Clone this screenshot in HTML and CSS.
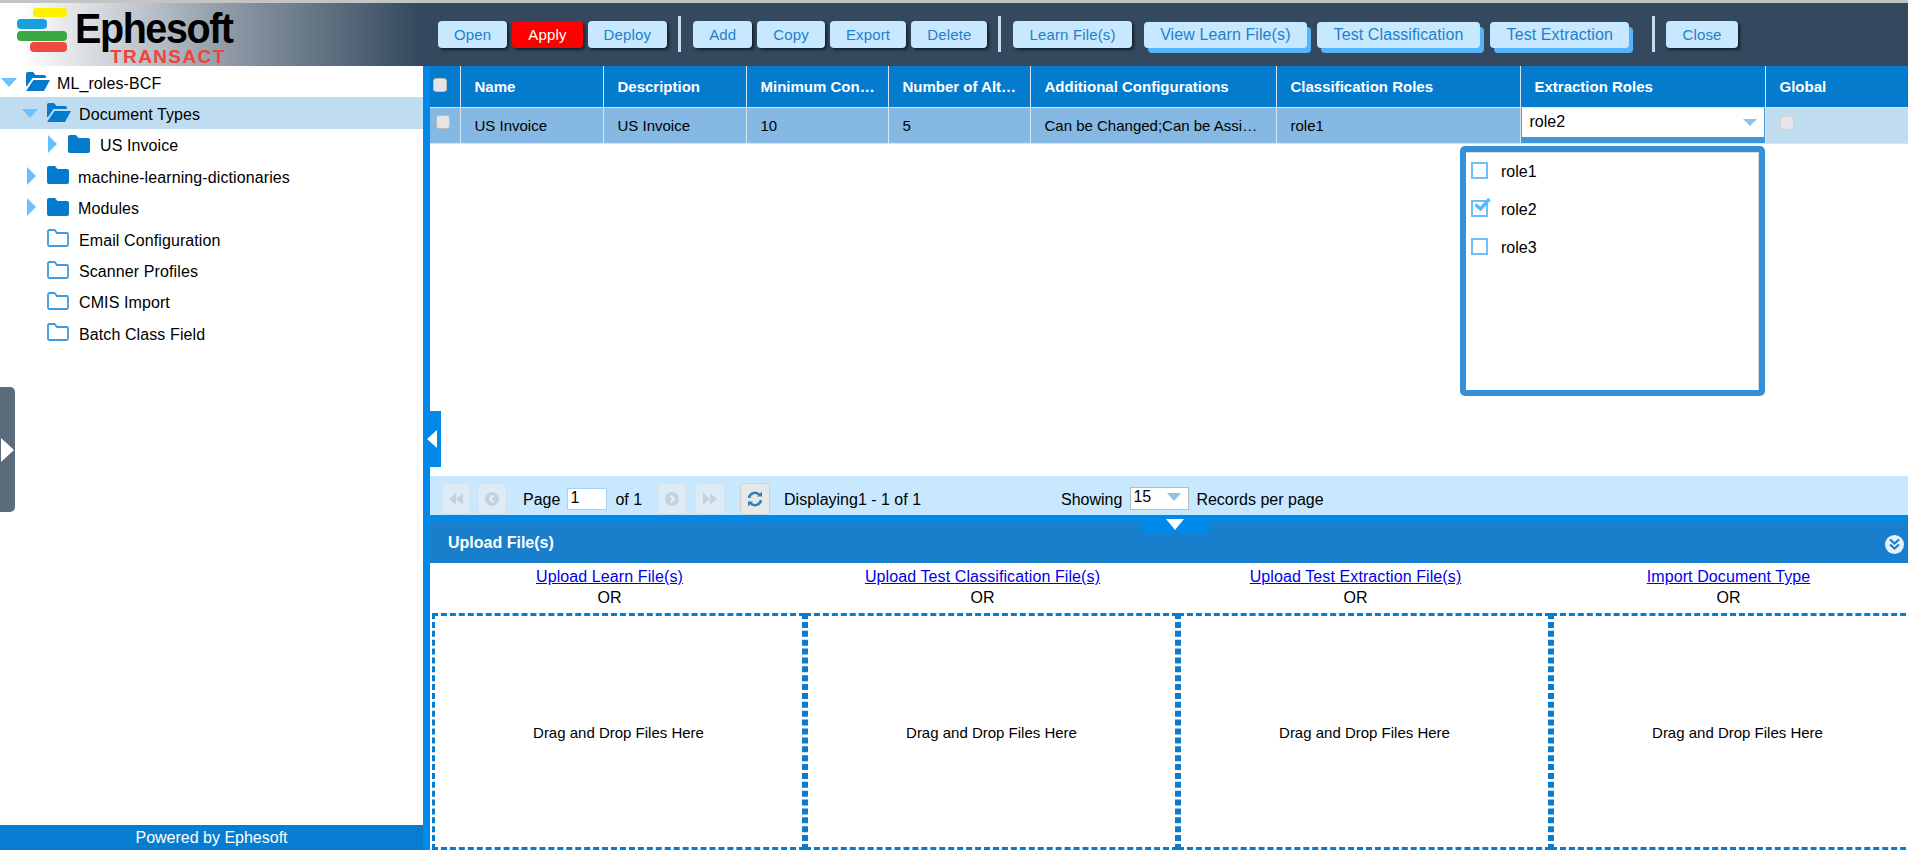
FILE: index.html
```html
<!DOCTYPE html>
<html lang="en">
<head>
    <meta charset="UTF-8">
    <title>Ephesoft Transact</title>
    <link rel="stylesheet" href="styles.css">
</head>
<body>
    <svg class="defs" width="0" height="0">
        <symbol id="folder-closed" viewBox="0 0 22 18">
            <path d="M2 0h6l2.500 3H20a2 2 0 0 1 2 2v11a2 2 0 0 1-2 2H2a2 2 0 0 1-2-2V2a2 2 0 0 1 2-2z" fill="#047bcd"/>
        </symbol>
        <symbol id="folder-open" viewBox="0 0 24 19">
            <path d="M0 2a2 2 0 0 1 2-2h5l2.500 3H18a2 2 0 0 1 2 2v1H6.500L1 14H0z" fill="#047bcd"/>
            <path d="M7.500 8H24l-6 11H0z" fill="#047bcd"/>
        </symbol>
        <symbol id="folder-empty" viewBox="0 0 22 18">
            <path d="M2.500 1h5l2.500 3h9.500A1.500 1.500 0 0 1 21 5.500v10a1.500 1.500 0 0 1-1.500 1.500h-17A1.500 1.500 0 0 1 1 15.500v-13A1.500 1.500 0 0 1 2.500 1z" fill="none" stroke="#3f9ae0" stroke-width="1.800"/>
        </symbol>
    </svg>

    <div class="top-line"></div>
    <header class="header">
        <div class="logo">
            <svg class="logo-bars" width="52" height="46" viewBox="0 0 52 46">
                <rect x="16" y="0" width="34" height="9" rx="3.500" fill="#fff200"/>
                <rect x="0" y="11" width="30" height="10" rx="4" fill="#17a0dc"/>
                <rect x="0" y="23" width="50" height="10" rx="4" fill="#3aa845"/>
                <rect x="13" y="34" width="37" height="10" rx="4" fill="#f0493e"/>
            </svg>
            <div class="logo-text">
                <span class="logo-name">Ephesoft</span>
                <span class="logo-product">TRANSACT</span>
            </div>
        </div>
        <nav class="toolbar">
            <button class="btn">Open</button>
            <button class="btn btn-red">Apply</button>
            <button class="btn">Deploy</button>
            <span class="sep"></span>
            <button class="btn">Add</button>
            <button class="btn">Copy</button>
            <button class="btn">Export</button>
            <button class="btn">Delete</button>
            <span class="sep"></span>
            <button class="btn">Learn File(s)</button>
            <button class="btn btn-tab btn-first-tab">View Learn File(s)</button>
            <button class="btn btn-tab">Test Classification</button>
            <button class="btn btn-tab">Test Extraction</button>
            <span class="sep sep-tab"></span>
            <button class="btn">Close</button>
        </nav>
    </header>

    <div class="content">
        <aside class="sidebar">
            <ul class="tree">
                <li class="node level-0">
                    <span class="arrow-down"></span>
                    <svg class="folder"><use href="#folder-open"/></svg>
                    <span class="label">ML_roles-BCF</span>
                </li>
                <li class="node level-1 selected">
                    <span class="arrow-down"></span>
                    <svg class="folder"><use href="#folder-open"/></svg>
                    <span class="label">Document Types</span>
                </li>
                <li class="node level-2">
                    <span class="arrow-right"></span>
                    <svg class="folder"><use href="#folder-closed"/></svg>
                    <span class="label">US Invoice</span>
                </li>
                <li class="node level-1">
                    <span class="arrow-right"></span>
                    <svg class="folder"><use href="#folder-closed"/></svg>
                    <span class="label">machine-learning-dictionaries</span>
                </li>
                <li class="node level-1">
                    <span class="arrow-right"></span>
                    <svg class="folder"><use href="#folder-closed"/></svg>
                    <span class="label">Modules</span>
                </li>
                <li class="node level-1 leaf">
                    <span class="arrow-none"></span>
                    <svg class="folder"><use href="#folder-empty"/></svg>
                    <span class="label">Email Configuration</span>
                </li>
                <li class="node level-1 leaf">
                    <span class="arrow-none"></span>
                    <svg class="folder"><use href="#folder-empty"/></svg>
                    <span class="label">Scanner Profiles</span>
                </li>
                <li class="node level-1 leaf">
                    <span class="arrow-none"></span>
                    <svg class="folder"><use href="#folder-empty"/></svg>
                    <span class="label">CMIS Import</span>
                </li>
                <li class="node level-1 leaf">
                    <span class="arrow-none"></span>
                    <svg class="folder"><use href="#folder-empty"/></svg>
                    <span class="label">Batch Class Field</span>
                </li>
            </ul>
            <div class="powered">Powered by Ephesoft</div>
            <div class="side-tab"><span class="side-tab-arrow"></span></div>
        </aside>

        <div class="divider">
            <div class="divider-tab"><span class="divider-arrow"></span></div>
        </div>

        <main class="main">
            <section class="grid-area">
                <table class="grid">
                    <colgroup>
                        <col class="col-check">
                        <col class="col-name">
                        <col class="col-name">
                        <col class="col-num">
                        <col class="col-num">
                        <col class="col-config">
                        <col class="col-class">
                        <col class="col-extract">
                        <col class="col-global">
                    </colgroup>
                    <thead>
                        <tr>
                            <th class="cell-check"><span class="check check-head"></span></th>
                            <th>Name</th>
                            <th>Description</th>
                            <th>Minimum Confidence</th>
                            <th>Number of Alternate Values</th>
                            <th>Additional Configurations</th>
                            <th>Classification Roles</th>
                            <th>Extraction Roles</th>
                            <th>Global</th>
                        </tr>
                    </thead>
                    <tbody>
                        <tr>
                            <td class="cell-check"><span class="check check-row"></span></td>
                            <td>US Invoice</td>
                            <td>US Invoice</td>
                            <td>10</td>
                            <td>5</td>
                            <td>Can be Changed;Can be Assigned</td>
                            <td>role1</td>
                            <td class="cell-editor">
                                <div class="editor"><span>role2</span><span class="caret"></span></div>
                            </td>
                            <td class="cell-global"><span class="check check-global"></span></td>
                        </tr>
                    </tbody>
                </table>

                <div class="role-menu">
                    <label class="role-item"><span class="role-box"></span>role1</label>
                    <label class="role-item">
                        <span class="role-box">
                            <svg class="role-tick" width="20" height="18" viewBox="0 0 20 18"><path d="M3.500 7.500l5 4.500 9-10" fill="none" stroke="#5db8fc" stroke-width="3.500"/></svg>
                        </span>role2
                    </label>
                    <label class="role-item"><span class="role-box"></span>role3</label>
                </div>
            </section>

            <div class="pager">
                <span class="pg-btn">
                    <svg width="16" height="14" viewBox="0 0 16 14"><path d="M8 1v12L1 7zM15 1v12L8 7z" fill="#c3d3de"/></svg>
                </span>
                <span class="pg-btn">
                    <svg width="16" height="16" viewBox="0 0 16 16"><circle cx="8" cy="8" r="7" fill="#c3d3de"/><path d="M9.500 4.500L6 8l3.500 3.500" fill="none" stroke="#e8f2f8" stroke-width="2"/></svg>
                </span>
                <span class="pg-text pg-page">Page</span>
                <input class="pg-input" value="1">
                <span class="pg-text">of 1</span>
                <span class="pg-btn pg-next">
                    <svg width="16" height="16" viewBox="0 0 16 16"><circle cx="8" cy="8" r="7" fill="#c3d3de"/><path d="M6.500 4.500L10 8l-3.500 3.500" fill="none" stroke="#e8f2f8" stroke-width="2"/></svg>
                </span>
                <span class="pg-btn">
                    <svg width="16" height="14" viewBox="0 0 16 14"><path d="M1 1v12l7-6zM8 1v12l7-6z" fill="#c3d3de"/></svg>
                </span>
                <span class="pg-btn pg-refresh">
                    <svg width="16" height="16" viewBox="0 0 16 16"><path d="M2 7a6 6 0 0 1 10.500-3M14 9a6 6 0 0 1-10.500 3" fill="none" stroke="#2d7fbe" stroke-width="2.500"/><path d="M10 5.500h5V.5zM6 10.500H1v5z" fill="#2d7fbe"/></svg>
                </span>
                <span class="pg-text pg-display">Displaying1 - 1 of 1</span>
                <span class="pg-text pg-showing">Showing</span>
                <span class="pg-select">15<span class="caret caret-small"></span></span>
                <span class="pg-text">Records per page</span>
            </div>

            <div class="upload-bar"></div>
            <div class="upload-head">
                <span>Upload File(s)</span>
                <svg class="upload-collapse" width="19" height="19" viewBox="0 0 19 19"><circle cx="9.500" cy="9.500" r="9.500" fill="#e4f2fb"/><path d="M5 4.500l4.500 4 4.500-4M5 9.500l4.500 4 4.500-4" fill="none" stroke="#197fcc" stroke-width="2.200"/></svg>
                <div class="upload-tab"><span class="upload-arrow"></span></div>
            </div>

            <section class="upload">
                <div class="upload-links">
                    <div class="upload-link"><a href="#">Upload Learn File(s)</a><span>OR</span></div>
                    <div class="upload-link"><a href="#">Upload Test Classification File(s)</a><span>OR</span></div>
                    <div class="upload-link"><a href="#">Upload Test Extraction File(s)</a><span>OR</span></div>
                    <div class="upload-link"><a href="#">Import Document Type</a><span>OR</span></div>
                </div>
                <div class="drops">
                    <div class="drop">Drag and Drop Files Here</div>
                    <div class="drop">Drag and Drop Files Here</div>
                    <div class="drop">Drag and Drop Files Here</div>
                    <div class="drop">Drag and Drop Files Here</div>
                </div>
            </section>
        </main>
    </div>
</body>
</html>
```

FILE: styles.css
```css
* {
    box-sizing: border-box;
}
html, body {
    margin: 0;
    height: 100%;
    overflow: hidden;
}
body {
    font-family: "Liberation Sans", Arial, sans-serif;
    font-size: 15px;
    color: #000;
    background-color: #fff;
}
.defs {
    position: absolute;
}
.top-line {
    height: 3px;
    background-color: #c4c4c4;
}

/* header */
.header {
    display: flex;
    height: 63px;
    background: linear-gradient(to right, #fff 0, #fff 20px, #8d99a5 230px, #34495e 420px);
}
.logo {
    display: flex;
    width: 438px;
    padding: 5px 0 0 17px;
}
.logo-bars {
    flex: none;
}
.logo-text {
    display: flex;
    flex-direction: column;
    margin-left: 6px;
}
.logo-name {
    width: 170px;
    margin-top: 2px;
    font-size: 42px;
    font-weight: bold;
    line-height: 38px;
    letter-spacing: -1.500px;
    transform: scaleX(0.94);
    transform-origin: left;
}
.logo-product {
    margin: -1px 0 0 35px;
    font-size: 19px;
    font-weight: bold;
    line-height: 19px;
    letter-spacing: 1.400px;
    color: #f0433a;
}
.toolbar {
    display: flex;
    align-items: flex-start;
    gap: 5px;
    padding-top: 18px;
}
.btn {
    height: 27px;
    padding: 0 16px;
    border: none;
    border-radius: 4px;
    font-family: inherit;
    font-size: 15px;
    letter-spacing: 0.150px;
    color: #1f7fc9;
    background-color: #c8e8ff;
    box-shadow: 2px 2px 3px #14202c;
}
.btn-red {
    color: #fff;
    background-color: #f00;
}
.btn-tab {
    margin: 1px 5px 0 0;
    height: 26px;
    padding: 0 16.500px;
    font-size: 16px;
    letter-spacing: 0.100px;
    box-shadow: 4px 5px 0 #55b4fb;
}
.btn-first-tab {
    margin-left: 7px;
}
.sep {
    width: 3px;
    height: 36px;
    margin: -5px 7px 0 6px;
    background-color: #c8dcec;
}
.sep-tab {
    margin-left: 13px;
    margin-right: 6px;
}

.content {
    display: flex;
    height: 784px;
}

/* left tree */
.sidebar {
    position: relative;
    display: flex;
    flex-direction: column;
    justify-content: space-between;
    flex: none;
    width: 423px;
}
.tree {
    margin: 0;
    padding: 0;
    list-style: none;
    font-size: 16px;
    letter-spacing: 0.100px;
}
.node {
    display: flex;
    align-items: center;
    height: 31.400px;
}
.node.selected {
    background-color: #bfdcf1;
}
.label {
    margin-top: 4px;
}
.level-0 {
    padding-left: 1px;
}
.level-1 {
    padding-left: 22px;
}
.level-2 {
    padding-left: 43px;
}
.arrow-down, .arrow-right, .arrow-none {
    flex: none;
    display: block;
    width: 25px;
    height: 0;
}
.arrow-down::before {
    content: "";
    display: block;
    width: 0;
    border-left: 8px solid transparent;
    border-right: 8px solid transparent;
    border-top: 9px solid #6cc0fc;
    margin-top: -4px;
}
.arrow-right::before {
    content: "";
    display: block;
    width: 0;
    margin-left: 5px;
    margin-top: -9px;
    border-top: 9px solid transparent;
    border-bottom: 9px solid transparent;
    border-left: 9px solid #6cc0fc;
}
.folder {
    flex: none;
    width: 24px;
    height: 19px;
    margin: -1px 8px 0 0;
}
.level-0 .folder {
    margin-right: 7px;
}
.level-2 .folder {
    width: 22px;
    height: 18px;
    margin-right: 10px;
}
.level-1 .arrow-right + .folder {
    width: 22px;
    height: 18px;
    margin-right: 9px;
}
.leaf .folder {
    width: 22px;
    height: 18px;
    margin-right: 10px;
}
.powered {
    height: 25px;
    font-size: 16px;
    line-height: 25px;
    text-align: center;
    color: #fff;
    background-color: #067dd0;
}
.side-tab {
    position: absolute;
    left: 0;
    top: 321px;
    display: flex;
    align-items: center;
    width: 15px;
    height: 125px;
    background-color: #5a6b7b;
    border-radius: 0 5px 5px 0;
}
.side-tab-arrow {
    margin-left: 1px;
    border-top: 12px solid transparent;
    border-bottom: 12px solid transparent;
    border-left: 13px solid #fff;
}
.divider {
    position: relative;
    flex: none;
    width: 7px;
    background-color: #0089e8;
}
.divider-tab {
    position: absolute;
    left: 0;
    top: 345px;
    display: flex;
    align-items: center;
    width: 18px;
    height: 56px;
    padding-left: 4px;
    background-color: #0089e8;
}
.divider-arrow {
    border-top: 9px solid transparent;
    border-bottom: 9px solid transparent;
    border-right: 10px solid #fff;
}

/* main column */
.main {
    display: flex;
    flex-direction: column;
    flex: 1;
    min-width: 0;
    overflow: hidden;
}
.grid-area {
    position: relative;
    height: 410px;
    flex: none;
}
.grid {
    width: 1478px;
    table-layout: fixed;
    border-collapse: collapse;
}
.col-check { width: 30px; }
.col-name { width: 143px; }
.col-num { width: 142px; }
.col-config { width: 246px; }
.col-class { width: 244px; }
.col-extract { width: 245px; }
.col-global { width: 143px; }
.grid th, .grid td {
    padding: 0 14px;
    text-align: left;
    white-space: nowrap;
    overflow: hidden;
    text-overflow: ellipsis;
    border-right: 1px solid #d3e6f4;
}
.grid th {
    height: 41px;
    padding-right: 8px;
    font-size: 15px;
    color: #fff;
    background-color: #047bcd;
    border-bottom: 1px solid #d3e6f4;
}
.grid td {
    height: 36px;
    font-size: 15px;
    background-color: #85b9e3;
    border-bottom: 1px solid #d3e6f4;
}
.grid th:last-child, .grid td:last-child {
    border-right: none;
}
.grid .cell-check {
    position: relative;
    padding: 0;
}
.check {
    position: absolute;
    width: 14px;
    height: 14px;
    background-color: #e5e5e5;
    border: 1px solid #bbb;
    border-radius: 3px;
}
.check-head {
    left: 3px;
    top: 12px;
}
.check-row {
    left: 6px;
    top: 7px;
}
.grid .cell-global {
    position: relative;
    background-color: #bfdcf1;
}
.check-global {
    left: 14px;
    top: 8px;
    border-color: #d5d5d5;
}
.grid .cell-editor {
    padding: 0;
    background-color: #3f97d9;
    vertical-align: top;
}
.editor {
    display: flex;
    justify-content: space-between;
    align-items: center;
    height: 30px;
    padding: 0 6px 0 8px;
    font-size: 16px;
    background-color: #fff;
    border: 1px solid #3f97d9;
    border-top: none;
}
.caret {
    display: block;
    margin-right: 1px;
    border-left: 7px solid transparent;
    border-right: 7px solid transparent;
    border-top: 7px solid #8fc0e8;
}
.role-menu {
    position: absolute;
    left: 1030px;
    top: 80px;
    width: 305px;
    height: 250px;
    padding: 1px 5px 0;
    background-color: #fff;
    border: 6px solid #3490d8;
    border-radius: 5px;
    box-shadow: inset 0 1px 0 #ddd, inset -1px 0 0 #ddd;
}
.role-item {
    display: flex;
    align-items: center;
    height: 38px;
    font-size: 16px;
}
.role-box {
    position: relative;
    flex: none;
    width: 17px;
    height: 17px;
    margin: -3px 13px 0 0;
    border: 2px solid #6cc0fc;
}
.role-tick {
    position: absolute;
    left: -1px;
    top: -5px;
}

/* pagination */
.pager {
    display: flex;
    align-items: flex-end;
    height: 39px;
    flex: none;
    padding-left: 11px;
    font-size: 16px;
    background-color: #c8e8ff;
}
.pg-btn {
    display: flex;
    align-items: center;
    justify-content: center;
    width: 30px;
    height: 32px;
    margin-right: 6px;
    background-color: #dcebf5;
    border: 1px solid #d2e2ec;
    border-radius: 4px;
}
.pg-next {
    margin-left: 15px;
    margin-right: 8px;
}
.pg-refresh {
    margin-left: 9px;
    background-color: #e8e8e8;
    border-color: #d0d0d0;
}
.pg-text {
    align-self: center;
    margin-top: 8px;
    white-space: nowrap;
}
.pg-page {
    margin-left: 10px;
}
.pg-input {
    align-self: center;
    width: 40px;
    height: 22px;
    margin: 7px 8px 0 7px;
    padding: 0 0 3px 2px;
    font-family: inherit;
    font-size: 16px;
    background-color: #fff;
    border: 1px solid #a9d2ef;
}
.pg-display {
    margin-left: 8px;
}
.pg-showing {
    margin-left: 140px;
}
.pg-select {
    align-self: center;
    display: flex;
    align-items: center;
    justify-content: space-between;
    width: 59px;
    height: 23px;
    margin: 5px 7px 0 8px;
    padding: 0 6px 2px 2px;
    background-color: #fff;
    border: 1px solid #bbb;
}
.caret-small {
    border-left-width: 7px;
    border-right-width: 7px;
    border-top-width: 8px;
}

/* upload panel */
.upload-bar {
    height: 7px;
    flex: none;
    background-color: #0089e8;
}
.upload-head {
    position: relative;
    display: flex;
    align-items: center;
    justify-content: space-between;
    height: 41px;
    flex: none;
    padding: 0 4px 0 18px;
    font-size: 16px;
    font-weight: bold;
    color: #fff;
    background-color: #197fcc;
}
.upload-collapse {
    margin-top: 4px;
}
.upload-tab {
    position: absolute;
    left: 711px;
    top: -7px;
    display: flex;
    justify-content: center;
    width: 68px;
    height: 18px;
    padding-top: 4px;
    background-color: #0089e8;
}
.upload-arrow {
    width: 0;
    height: 0;
    border-left: 9px solid transparent;
    border-right: 9px solid transparent;
    border-top: 11px solid #fff;
}
.upload-links {
    display: grid;
    grid-template-columns: repeat(4, 373px);
    margin-left: -7px;
    padding-top: 3px;
}
.upload-link {
    display: flex;
    flex-direction: column;
    align-items: center;
    font-size: 16px;
    letter-spacing: 0.100px;
    line-height: 21px;
}
.upload-link a {
    color: #00e;
}
.drops {
    display: grid;
    grid-template-columns: repeat(4, 373px);
    height: 237px;
    margin: 5px 0 0 2px;
}
.drop {
    display: flex;
    align-items: center;
    justify-content: center;
    padding-top: 2px;
    border: 3px dashed #0a7cce;
}
```
